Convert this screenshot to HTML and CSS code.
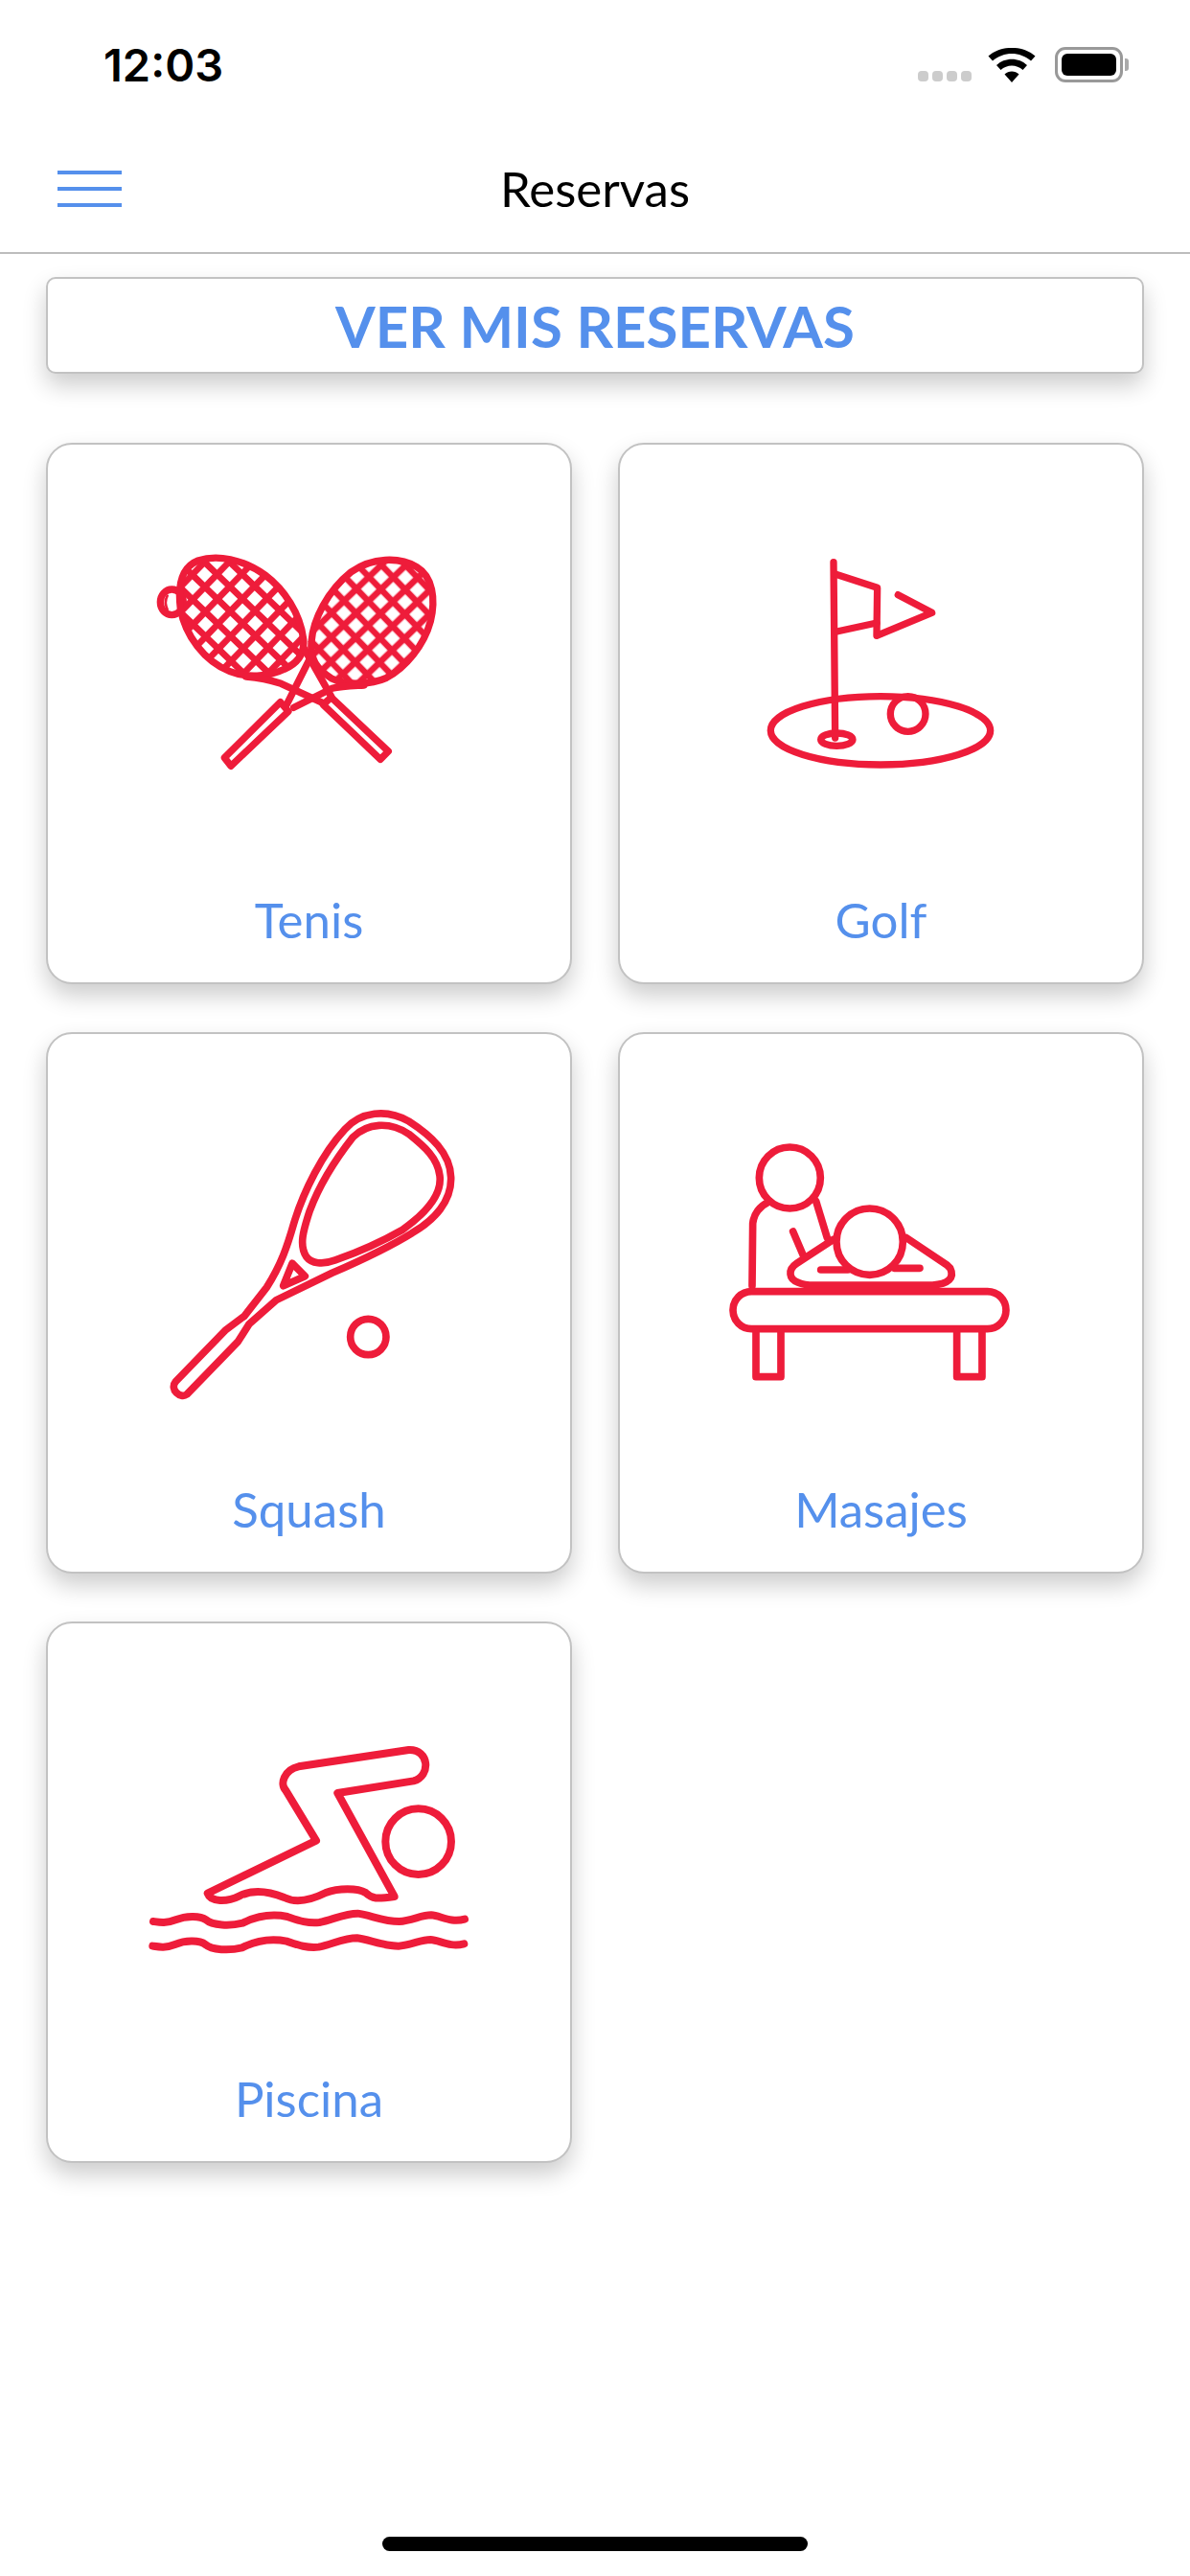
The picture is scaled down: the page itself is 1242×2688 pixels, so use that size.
FILE: index.html
```html
<!DOCTYPE html>
<html lang="es">
<head>
    <meta charset="UTF-8">
    <meta name="viewport" content="width=device-width, initial-scale=1.0">
    <title>Reservas</title>
    <link rel="stylesheet" href="styles.css">
</head>
<body>
    <div class="status-bar">
        <span class="time">12:03</span>
        <div class="status-icons">
            <div class="signal"><i></i><i></i><i></i><i></i></div>
            <svg class="wifi" width="50" height="36" viewBox="0 0 50 36">
                <path d="M25 36 L17.5 27.5 C21.5 23.5 28.5 23.5 32.5 27.5 Z"/>
                <path d="M13.5 23 L9 18 C17.5 9.5 32.5 9.5 41 18 L36.5 23 C30 17 20 17 13.5 23 Z"/>
                <path d="M5 13.5 L0.5 8.5 C14 -3 36 -3 49.5 8.5 L45 13.5 C33.5 3.5 16.5 3.5 5 13.5 Z"/>
            </svg>
            <div class="battery"><div class="battery-level"></div></div>
        </div>
    </div>

    <header class="nav">
        <div class="burger"><i></i><i></i><i></i></div>
        <h1>Reservas</h1>
    </header>

    <a class="my-bookings">VER MIS RESERVAS</a>

    <div class="services">
        <div class="card">
            <svg class="icon" viewBox="2 2 545 420">
                <defs>
                    <pattern id="netLeft" patternUnits="userSpaceOnUse" width="55" height="55" patternTransform="translate(300 225) rotate(44)">
                        <path d="M27.5 0 V55 M0 27.5 H55" stroke="#ee1c3a" stroke-width="20" fill="none"/>
                    </pattern>
                    <pattern id="netRight" patternUnits="userSpaceOnUse" width="54" height="54" patternTransform="translate(772 233) rotate(46)">
                        <path d="M27 0 V54 M0 27 H54" stroke="#ee1c3a" stroke-width="20" fill="none"/>
                    </pattern>
                </defs>
                <g transform="translate(92 88) scale(0.3333)" class="line" stroke-width="22">
                    <ellipse cx="118" cy="235" rx="36" ry="40"/>
                    <path d="M104 215 C97 228 97 243 104 258" stroke-width="8"/>
                    <path class="net-left" d="M530 350 C520 270 470 195 410 150 C340 100 260 85 200 105 C150 125 135 175 145 255 C160 340 220 420 300 452 C350 472 420 470 470 445 C515 425 535 395 530 350 Z"/>
                    <path d="M532 380 L617 530 M350 468 C400 472 430 480 460 490 L590 550"/>
                    <path class="net-right" d="M555 360 C560 290 605 200 680 140 C745 95 830 92 885 125 C935 155 945 225 928 295 C908 370 850 440 790 472 C740 495 660 495 620 475 C570 445 550 410 555 360 Z"/>
                    <path d="M556 400 L478 555 M720 495 C680 497 650 497 620 505 L500 565"/>
                    <path d="M617 533 L796 702 L771 727 L592 556 Z"/>
                    <path d="M458 548 L483 577 L303 748 L283 722 Z"/>
                </g>
            </svg>
            <span class="card-label">Tenis</span>
        </div>

        <div class="card">
            <svg class="icon" viewBox="2 2 545 420">
                <g transform="translate(135 98) scale(0.3333)" class="line" stroke-width="22">
                    <path d="M270 80 L275 630"/>
                    <path d="M275 117 L407 160 L405 310 L578 238 L472 182"/>
                    <path d="M280 297 L405 270"/>
                    <ellipse cx="417" cy="607" rx="344" ry="107"/>
                    <ellipse cx="280" cy="635" rx="50" ry="20"/>
                    <circle cx="503" cy="555" r="55"/>
                </g>
            </svg>
            <span class="card-label">Golf</span>
        </div>

        <div class="card">
            <svg class="icon" viewBox="2 2 545 420">
                <g transform="translate(112 63) scale(0.3333)" class="line" stroke-width="23">
                    <path d="M70 905 L225 745 L285 700 L355 610 C400 540 420 480 440 410 C470 310 530 190 600 115 C650 60 730 50 800 90 C870 135 930 190 932 265 C935 340 880 400 810 440 C730 490 640 530 560 565 L385 650 L300 725 L265 780 L105 945 C85 960 50 930 70 905 Z"/>
                    <path d="M480 515 C455 480 470 430 490 370 C520 290 570 210 625 140 C670 95 740 90 800 130 C850 170 890 205 897 260 C905 320 850 380 780 430 C710 470 640 500 570 525 C530 540 495 535 480 515 Z"/>
                    <path d="M435 535 L475 575 L407 605 Z"/>
                    <circle cx="673" cy="765" r="56"/>
                </g>
            </svg>
            <span class="card-label">Squash</span>
        </div>

        <div class="card">
            <svg class="icon" viewBox="2 2 545 420">
                <g transform="translate(95 93) scale(0.3333)" class="line" stroke-width="23">
                    <circle cx="253" cy="177" r="96"/>
                    <path d="M183 255 C160 265 140 290 137 320 L135 515"/>
                    <path d="M335 250 L370 365"/>
                    <path d="M263 345 L295 420"/>
                    <path d="M390 370 L275 445 C245 465 250 495 280 505 C300 515 330 513 340 513 L700 513 C750 510 770 490 755 460 L745 450 L618 365"/>
                    <circle cx="503" cy="377" r="104"/>
                    <path d="M350 465 L435 465 M580 460 L660 460"/>
                    <rect x="75" y="533" width="855" height="117" rx="58"/>
                    <path d="M147 655 L147 800 L225 800 L225 655 M776 655 L776 800 L855 800 L855 655"/>
                </g>
            </svg>
            <span class="card-label">Masajes</span>
        </div>

        <div class="card">
            <svg class="icon" viewBox="2 2 545 420">
                <g transform="translate(92 108) scale(0.3333)" class="line" stroke-width="24">
                    <path d="M860 78 L515 130 C470 140 455 185 475 205 L570 362 L230 527 C240 555 290 555 330 535 C370 515 420 520 470 540 C510 560 560 545 600 525 C640 510 700 510 725 525 C745 545 760 545 815 537 L637 213 L875 175 C930 160 925 75 860 78 Z"/>
                    <circle cx="890" cy="365" r="103"/>
                    <path d="M60 615 C80 618 100 622 130 610 C160 598 205 595 225 610 C245 628 300 630 340 620 C380 600 430 590 480 600 C510 610 540 622 580 618 C620 610 660 590 700 590 C740 595 780 615 830 615 C870 612 900 595 930 595 C960 597 990 620 1035 608"/>
                    <path d="M58 692 C78 695 98 699 128 687 C158 675 203 672 223 687 C243 705 298 707 338 697 C378 677 428 667 478 677 C508 687 538 699 578 695 C618 687 658 667 698 667 C738 672 778 692 828 692 C868 689 898 672 928 672 C958 674 988 697 1033 685"/>
                </g>
            </svg>
            <span class="card-label">Piscina</span>
        </div>
    </div>

    <div class="home-indicator"></div>
</body>
</html>
```

FILE: styles.css
```css
* {
    box-sizing: border-box;
}
html, body {
    margin: 0;
    background-color: white;
}
body {
    font-family: 'Lato', 'Liberation Sans', sans-serif;
    width: 1242px;
    height: 2688px;
    overflow: hidden;
    display: flex;
    flex-direction: column;
}
.status-bar {
    height: 132px;
    padding: 40px 70px 0 108px;
    display: flex;
    justify-content: space-between;
    align-items: flex-start;
}
.time {
    font-family: 'Inter', 'Liberation Sans', sans-serif;
    font-size: 47px;
    font-weight: 600;
    line-height: 56px;
    color: #000;
}
.status-icons {
    display: flex;
    align-items: flex-end;
    margin-top: 9px;
}
.signal {
    display: flex;
    gap: 4px;
    margin-right: 17px;
    margin-bottom: 1px;
}
.signal i {
    display: block;
    width: 11px;
    height: 11px;
    border-radius: 4px;
    background-color: #ccc;
}
.wifi {
    fill: #000;
    margin-right: 20px;
}
.battery {
    position: relative;
    width: 71px;
    height: 37px;
    padding: 4px;
    border: 3px solid #999;
    border-radius: 11px;
}
.battery::after {
    content: "";
    position: absolute;
    right: -9px;
    top: 9px;
    width: 4px;
    height: 13px;
    border-radius: 0 3px 3px 0;
    background-color: #aaa;
}
.battery-level {
    width: 100%;
    height: 100%;
    background-color: #000;
    border-radius: 6px;
}
.nav {
    position: relative;
    height: 133px;
    border-bottom: 2px solid #bdbdbd;
    display: flex;
    align-items: center;
    justify-content: center;
}
.nav h1 {
    margin: 0 0 3px 0;
    font-size: 51px;
    font-weight: 400;
    color: #000;
}
.burger {
    position: absolute;
    left: 60px;
    top: 46px;
    width: 67px;
    display: flex;
    flex-direction: column;
    gap: 13px;
}
.burger i {
    display: block;
    height: 4px;
    background-color: #5590ec;
}
.my-bookings {
    margin: 24px 48px 0;
    height: 101px;
    border: 2px solid #c2c2c2;
    border-radius: 10px;
    box-shadow: 0 12px 24px rgba(0,0,0,0.2);
    background-color: white;
    display: flex;
    align-items: center;
    justify-content: center;
    font-size: 60px;
    font-weight: 700;
    color: #5590ec;
}
.services {
    display: grid;
    grid-template-columns: repeat(2, 549px);
    grid-auto-rows: 565px;
    gap: 50px 48px;
    margin: 72px 48px 0;
}
.card {
    border: 2px solid #c2c2c2;
    border-radius: 27px;
    background-color: white;
    box-shadow: 0 12px 24px rgba(0,0,0,0.2);
    display: flex;
    flex-direction: column;
    align-items: center;
}
.icon {
    display: block;
    width: 545px;
    height: 420px;
    overflow: visible;
}
.line {
    fill: none;
    stroke: #ee1c3a;
    stroke-linecap: round;
    stroke-linejoin: round;
}
.net-left {
    fill: url(#netLeft);
}
.net-right {
    fill: url(#netRight);
}
.card-label {
    margin-top: 47px;
    font-size: 51px;
    line-height: 58px;
    color: #5590ec;
}
.home-indicator {
    position: absolute;
    left: 399px;
    top: 2647px;
    width: 444px;
    height: 15px;
    border-radius: 8px;
    background-color: #000;
}
```
